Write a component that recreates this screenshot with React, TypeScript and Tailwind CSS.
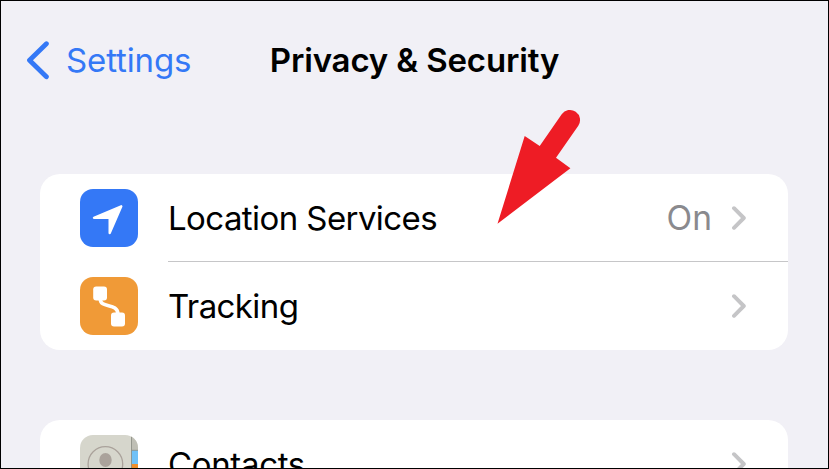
import type { ReactNode } from "react";

function Chevron() {
  return (
    <svg className="w-4 h-6 shrink-0" viewBox="0 0 16 24" fill="none" stroke="#c5c5c7" strokeWidth="3.9" strokeLinecap="round" strokeLinejoin="round">
      <path d="M3 2.2 12.8 12 3 21.8" />
    </svg>
  );
}

function LocationIcon() {
  return (
    <svg className="size-[58px]" viewBox="0 0 58 58">
      <rect width="58" height="58" rx="13" fill="#3478f6" />
      <path d="M41.3 17.3 14 28.9H29.7V44L41.3 17.3Z" fill="#fff" stroke="#fff" strokeWidth="2.4" strokeLinejoin="round" />
    </svg>
  );
}

function TrackingIcon() {
  return (
    <svg className="size-[58px]" viewBox="0 0 58 58">
      <rect width="58" height="58" rx="13" fill="#f09a37" />
      <rect x="13.2" y="9.6" width="13.8" height="13.8" rx="3" fill="#fff" />
      <rect x="31" y="35.6" width="14" height="14" rx="3" fill="#fff" />
      <path d="M20.3 22C20.3 32 37.8 25.5 37.8 37" fill="none" stroke="#fff" strokeWidth="3.6" />
    </svg>
  );
}

function ContactsIcon() {
  return (
    <svg className="size-[58px] rounded-[13px]" viewBox="0 0 58 58">
      <rect width="58" height="58" fill="#d6d6cc" />
      <rect x="51" width="7" height="15" fill="#bfbfb5" />
      <rect x="51" y="15" width="7" height="14" fill="#70c1f7" />
      <rect x="51" y="29" width="7" height="15" fill="#ef8f2e" />
      <rect x="51" y="44" width="7" height="14" fill="#bfbfb5" />
      <path d="M51.5 0V58M51 15.3H58" stroke="#8f9188" strokeWidth="0.9" />
      <circle cx="25.4" cy="29" r="17.3" fill="none" stroke="#aaa29b" strokeWidth="1.3" />
      <ellipse cx="25.5" cy="25" rx="6.2" ry="7" fill="#aaa29b" />
    </svg>
  );
}

function Row({ icon, label, value, divider }: { icon: ReactNode; label: ReactNode; value?: string; divider?: boolean }) {
  return (
    <div className="flex h-[88px] pl-10">
      <div className="w-[88px] shrink-0 pt-[15px]">{icon}</div>
      <div className={`flex flex-1 items-center pr-[41px] ${divider ? "border-b border-[#c6c6c8]" : "pb-px"}`}>
        <span className="text-[33px] leading-[40px]">{label}</span>
        <span className="ml-auto mr-[19px] text-[33.5px] leading-[40px] text-[#8a8a8e]">{value}</span>
        <Chevron />
      </div>
    </div>
  );
}

function Pointer() {
  return (
    <svg className="absolute left-[489px] top-[99px] w-[100px] h-[130px]" viewBox="490 100 100 130">
      <path d="M497.5 223.7 524.7 136 539.7 146 561.7 114.3A10 10 0 0 1 578.3 125.7L556 157.7 570.4 168.3Z" fill="#ee1c25" />
    </svg>
  );
}

export default function App() {
  return (
    <div className="relative w-[829px] h-[469px] overflow-hidden border border-black bg-[#f1f0f6] font-[Inter,sans-serif] text-black">
      <header className="relative flex h-[118px] items-center justify-center">
        <a className="absolute left-[25px] top-[39px] flex h-10 items-center text-[#3478f6]">
          <svg className="w-6 h-10" viewBox="0 0 24 40" fill="none" stroke="currentColor" strokeWidth="4.8" strokeLinecap="round" strokeLinejoin="round">
            <path d="M20.4 3.7 3.5 20.2 20.4 36.7" />
          </svg>
          <span className="ml-4 text-[33px] leading-[40px] tracking-[-0.12px]">Settings</span>
        </a>
        <h1 className="text-[33px] leading-[40px] font-semibold tracking-[-0.15px]">Privacy &amp; Security</h1>
      </header>

      <main className="mt-[55px] pl-[39px] pr-10">
        <section className="rounded-[20px] bg-white">
          <Row icon={<LocationIcon />} label={<span className="tracking-[-0.58px]">Location Services</span>} value="On" divider />
          <Row icon={<TrackingIcon />} label={<span className="tracking-[-0.6px]">Tracking</span>} />
        </section>
        <section className="mt-[70px] rounded-[20px] bg-white">
          <Row icon={<ContactsIcon />} label={<span className="tracking-[-0.35px]">Contacts</span>} />
        </section>
      </main>

      <Pointer />
    </div>
  );
}
